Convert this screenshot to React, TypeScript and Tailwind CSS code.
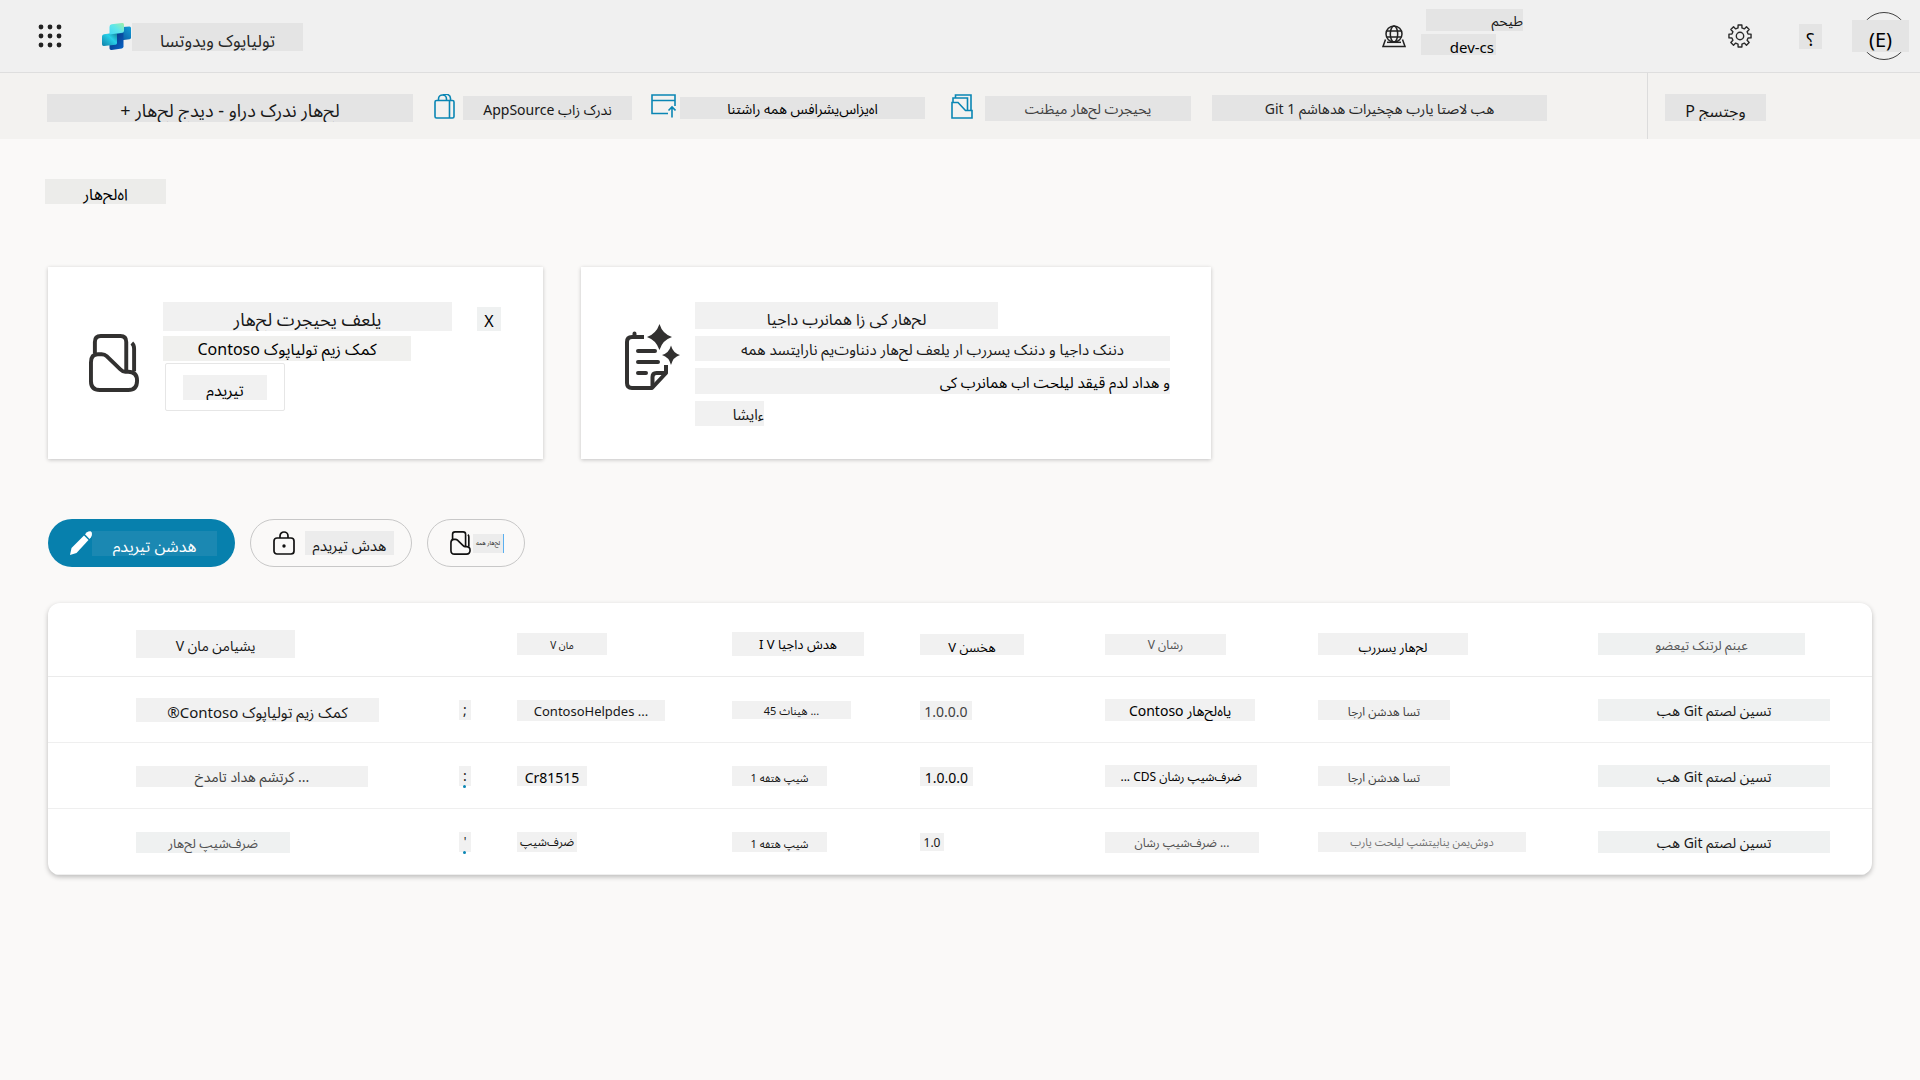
import type { ReactNode } from "react";

const font = "font-['Noto_Sans','Noto_Sans_Arabic',sans-serif]";

/** A shaded text block; letters run strictly left to right. */
function Tag({ className = "", children }: { className?: string; children: ReactNode }) {
  return (
    <span className={`flex shrink-0 items-end justify-center overflow-hidden whitespace-nowrap [direction:ltr] [unicode-bidi:bidi-override] ${className}`}>
      <span className="[unicode-bidi:bidi-override]">{children}</span>
    </span>
  );
}

function Waffle() {
  const p = [3, 12, 21];
  return (
    <svg width="24" height="24" viewBox="0 0 24 24" fill="#222">
      {p.map((y) => p.map((x) => <circle key={`${x}-${y}`} cx={x} cy={y} r="2.4" />))}
    </svg>
  );
}

function Logo() {
  return (
    <svg width="29" height="27" viewBox="0 0 29 27">
      <defs>
        <linearGradient id="top" x1="0" y1="1" x2="1" y2="0">
          <stop offset="0" stopColor="#3fd8f5" />
          <stop offset="0.5" stopColor="#5fe6ea" />
          <stop offset="1" stopColor="#a0f0a8" />
        </linearGradient>
        <linearGradient id="left" x1="0" y1="1" x2="1" y2="0">
          <stop offset="0" stopColor="#0f7fa8" />
          <stop offset="0.6" stopColor="#27d0e8" />
          <stop offset="1" stopColor="#127f96" />
        </linearGradient>
        <linearGradient id="right" x1="0" y1="1" x2="1" y2="0">
          <stop offset="0" stopColor="#0a4a98" />
          <stop offset="1" stopColor="#13a0d8" />
        </linearGradient>
        <linearGradient id="bottom" x1="0" y1="0" x2="1" y2="1">
          <stop offset="0" stopColor="#0a2f78" />
          <stop offset="1" stopColor="#0765c8" />
        </linearGradient>
      </defs>
      <path d="M14 4.500 27.500 3.500q1.500 0 1.500 1.500v9.500q0 1.500-1.500 1.700L14 18z" fill="url(#right)" />
      <path d="M7.500 12 21.500 10v13.500q0 1.700-1.700 2l-10.100 1.500q-2 .2-2.200-1.700z" fill="url(#bottom)" />
      <path d="M0 13.500q0-2 2-2.200L15 9.500V20q0 1.500-1.500 1.700L2 23q-2 .2-2-1.700z" fill="url(#left)" />
      <path d="M7.500 4Q7.500 1.500 9.700 1.200L20 0q2-.2 2 1.700v6q0 1.700-1.700 2L7.500 11.500z" fill="url(#top)" />
    </svg>
  );
}

function Globe() {
  return (
    <svg width="24" height="23" viewBox="0 0 24 23" fill="none" stroke="#222" strokeWidth="1.500">
      <circle cx="12" cy="9" r="8" />
      <ellipse cx="12" cy="9" rx="3.700" ry="8" />
      <path d="M4.700 6h14.600M4.700 12h14.600" />
      <path d="M3.500 14.500 1 21.500h22l-2.500-7" />
      <path d="M5 17.300h14" />
    </svg>
  );
}

function Gear() {
  const teeth = 8;
  const pts: string[] = [];
  for (let i = 0; i < teeth; i++) {
    const a = (i * 2 * Math.PI) / teeth;
    [[-0.24, 8.3], [-0.17, 11.2], [0.17, 11.2], [0.24, 8.3]].forEach(([d, r]) => {
      pts.push(`${(12 + r * Math.sin(a + d)).toFixed(2)},${(12 - r * Math.cos(a + d)).toFixed(2)}`);
    });
  }
  return (
    <svg width="24" height="24" viewBox="0 0 24 24" fill="none" stroke="#2a2a2a" strokeWidth="1.400" strokeLinejoin="round">
      <polygon points={pts.join(" ")} />
      <circle cx="12" cy="12" r="3.700" />
    </svg>
  );
}

function Bag() {
  return (
    <svg width="21" height="25" viewBox="0 0 21 25" fill="none" stroke="#0a86b4" strokeWidth="1.600">
      <rect x="1" y="6.500" width="19" height="17.500" rx="1.500" />
      <path d="M15.500 7v17M4.500 7V5a4 4 0 0 1 8 0v2M9 1.300a4.500 4.500 0 0 1 7.500 3.700v2" />
    </svg>
  );
}

function Publish() {
  return (
    <svg width="25" height="24" viewBox="0 0 25 24" fill="none" stroke="#0a86b4" strokeWidth="1.600">
      <path d="M17 19.500H1V1h23v11M1 6.500h23" />
      <path d="M21 23.500V13M17.500 16.500 21 13l3.500 3.500" />
    </svg>
  );
}

function SharpFolder() {
  return (
    <svg width="22" height="25" viewBox="0 0 22 25" fill="none" stroke="#0a86b4" strokeWidth="1.600">
      <path d="M1 8.500h6l7.500 8H21V24H1z" />
      <path d="M2 8V4h14.500v12.500M4.500 4V1H20v15" />
    </svg>
  );
}

function RoundFolder({ width, height, color, stroke }: { width: number; height: number; color: string; stroke: number }) {
  return (
    <svg width={width} height={height} viewBox="0 0 51 59" fill="none" stroke={color} strokeWidth={stroke} strokeLinejoin="round">
      <path d="M6 20V8q0-6 6-6h20q6 0 6 6v30" />
      <path d="M43.700 9q2.300 2 2.300 6v23" />
      <path d="M2 29q0-8.500 7-8.500h4q3 0 5 2l14 13.500q2.500 2.500 5 2.500h3q9 0 9 9 0 9.500-9 9.500H11q-9 0-9-9z" />
    </svg>
  );
}

function NoteSpark() {
  return (
    <svg width="55" height="66" viewBox="0 0 55 66" fill="none" stroke="#323130" strokeWidth="4">
      <path d="M19 13H7q-5 0-5 5v41q0 5 5 5h20l14-15v-8" strokeLinejoin="round" />
      <path d="M27.500 63V53q0-4 4-4H42" />
      <path d="M9.500 9.500v3M13 27h17M13 38h20M13 49h8" strokeLinecap="round" />
      <path d="M34.500 0q3 10 12.500 13-9.500 3-12.500 13Q31 16 22 13q9-3 12.500-13z" fill="#323130" stroke="none" />
      <path d="M46 21.500q2 7.500 9 9.500-7 2-9 10-2-8-9-10 7-2 9-9.500z" fill="#323130" stroke="none" />
    </svg>
  );
}

function Pencil() {
  return (
    <svg width="22" height="24" viewBox="0 0 22 24" fill="#fff">
      <path d="M14 4.500 18.500 9 6.500 22 0 24l1.500-7z" />
      <path d="M15 3.300 17 1.200Q18.500 0 20.500.2 22 .5 22 3 22 5 21 6.200L19.500 7.900z" />
    </svg>
  );
}

function Lock() {
  return (
    <svg width="22" height="24" viewBox="0 0 22 24" fill="none" stroke="#111" strokeWidth="1.700">
      <rect x="1" y="7" width="20" height="16" rx="3" />
      <path d="M7 7V5a4 4 0 0 1 8 0v2" />
      <circle cx="11" cy="15" r="1.700" fill="#111" stroke="none" />
    </svg>
  );
}

const gray = "bg-[#f1f1f1]";
const cool = "bg-[#eff1f1]";

type Cell = { text: string; box: string; dot?: boolean };

const columns: Cell[] = [
  { text: "V نام نمایشی", box: `${gray} h-7 w-[159px] text-[14px] leading-6` },
  { text: "", box: "" },
  { text: "V نام", box: `${gray} h-[22px] w-[90px] text-[10px] leading-5` },
  { text: "I V ایجاد شده", box: `${gray} h-6 w-[132px] text-[13px] leading-6 text-black` },
  { text: "V نسخه", box: `${gray} h-[21px] w-[104px] text-[13px] leading-4 text-black` },
  { text: "V ناشر", box: `${gray} h-[21px] w-[121px] text-[12px] leading-5 text-neutral-600` },
  { text: "بررسی راه‌حل", box: `${gray} h-[22px] w-[150px] text-[13px] leading-4 text-black` },
  { text: "وضعیت کنترل منبع", box: `${cool} h-[22px] w-[207px] text-[13px] leading-5 text-neutral-600` },
];

const check = `${gray} h-5 w-[132px] text-[12px] leading-4 text-neutral-700`;
const git = `${cool} h-[22px] w-[232px] text-[14px] leading-5`;
const week = `${gray} h-5 w-[95px] text-[11px] leading-4`;

const rows: Cell[][] = [
  [
    { text: "®Contoso کوپایلوت میز کمک", box: `${gray} h-6 w-[243px] text-[15px] leading-5` },
    { text: ";", box: `${gray} h-5 w-3 text-[14px] leading-5` },
    { text: "ContosoHelpdes ...", box: `${gray} h-[21px] w-[148px] text-[13px] leading-5` },
    { text: "45 ثانیه ...", box: `${gray} h-[18px] w-[119px] text-[11px] leading-4` },
    { text: "1.0.0.0", box: `${gray} h-[19px] w-[52px] text-[14px] leading-4 text-neutral-700` },
    { text: "Contoso راه‌حل‌های", box: `${gray} h-[22px] w-[150px] text-[14px] leading-5 text-black` },
    { text: "اجرا نشده است", box: check },
    { text: "به Git متصل نیست", box: git },
  ],
  [
    { text: "خدمات داده مشترک ...", box: `${gray} h-[21px] w-[232px] text-[14px] leading-5 text-neutral-700` },
    { text: ":", box: `${gray} h-5 w-3 text-[14px] leading-5`, dot: true },
    { text: "Cr81515", box: `${gray} h-5 w-[70px] text-[14px] leading-4 text-black` },
    { text: "1 هفته پیش", box: week },
    { text: "1.0.0.0", box: `${gray} h-[19px] w-[53px] text-[14px] leading-4 text-black` },
    { text: "... CDS ناشر پیش‌فرض", box: `${gray} h-[22px] w-[152px] text-[12px] leading-5 text-black` },
    { text: "اجرا نشده است", box: check },
    { text: "به Git متصل نیست", box: git },
  ],
  [
    { text: "راه‌حل پیش‌فرض", box: `${cool} h-[21px] w-[154px] text-[13px] leading-5 text-neutral-600` },
    { text: "'", box: `${gray} h-5 w-3 text-[12px] leading-5`, dot: true },
    { text: "پیش‌فرض", box: `${gray} h-5 w-[60px] text-[12px] leading-5` },
    { text: "1 هفته پیش", box: week },
    { text: "1.0", box: `${gray} h-[18px] w-6 text-[12px] leading-4` },
    { text: "ناشر پیش‌فرض ...", box: `${gray} h-[21px] w-[154px] text-[12px] leading-5 text-neutral-600` },
    { text: "برای تحلیل پشتیبانی نمی‌شود", box: `${gray} h-5 w-[208px] text-[11px] leading-5 text-neutral-500` },
    { text: "به Git متصل نیست", box: git },
  ],
];

const bar = "bg-[#e4e4e4]";

export default function App() {
  return (
    <div className={`min-h-screen bg-[#faf9f8] text-neutral-900 ${font}`}>
      <header className="flex h-[73px] items-center border-b border-[#dedede] bg-[#f0f0f0] pl-[38px] pr-[11px]">
        <button aria-label="Apps" className="mr-10">
          <Waffle />
        </button>
        <Logo />
        <Tag className={`${bar} ml-px mt-0.5 h-7 w-[171px] text-[17px] leading-5 text-neutral-800`}>استودیو کوپایلوت</Tag>
        <div className="ml-auto flex items-center">
          <Globe />
          <div className="ml-[15px] mr-[205px] flex w-[102px] flex-col gap-[3px] pb-2">
            <Tag className={`${bar} ml-[5px] h-[22px] justify-end text-[14px] leading-5`}>محیط</Tag>
            <Tag className={`${bar} h-[21px] w-[75px] justify-end pr-0.5 text-[15px] leading-4 text-black`}>dev-cs</Tag>
          </div>
          <button aria-label="Settings">
            <Gear />
          </button>
          <button className="ml-[47px]">
            <Tag className={`${bar} h-[25px] w-[23px] text-[18px] leading-5 text-black`}>؟</Tag>
          </button>
          <button className="relative ml-[30px] flex h-12 w-[57px] items-center justify-center">
            <span className="absolute left-2 top-0 size-12 rounded-full border border-neutral-700" />
            <Tag className={`${bar} relative h-8 w-full text-[20px] leading-6 text-black`}>(E)</Tag>
          </button>
        </div>
      </header>

      <nav className="flex h-[66px] items-stretch bg-[#f3f2f0] pl-[47px]">
        <div className="flex items-center">
          <button>
            <Tag className={`${bar} mt-1 h-7 w-[366px] text-[18px] leading-6`}>+ راه‌حل جدید - وارد کردن راه‌حل</Tag>
          </button>
          <button className="ml-[21px] flex items-center gap-2">
            <Bag />
            <Tag className={`${bar} mt-1 h-6 w-[169px] text-[14px] leading-5`}>AppSource باز کردن</Tag>
          </button>
          <button className="ml-[19px] flex items-center gap-1">
            <Publish />
            <Tag className={`${bar} mt-1 h-[22px] w-[245px] text-[14px] leading-5 text-black`}>انتشار همه سفارشی‌سازی‌ها</Tag>
          </button>
          <button className="ml-[26px] flex items-center gap-3">
            <SharpFolder />
            <Tag className={`${bar} mt-1 h-[25px] w-[206px] text-[14px] leading-6 text-neutral-700`}>تنظیم راه‌حل ترجیحی</Tag>
          </button>
          <button className="ml-[21px]">
            <Tag className={`${bar} mt-1 h-[26px] w-[335px] text-[14px] leading-6 text-neutral-800`}>Git 1 مشاهده تاریخچه برای اتصال به</Tag>
          </button>
        </div>
        <div className="ml-auto flex w-[273px] items-center border-l border-[#dcdcdc] pl-[17px]">
          <button>
            <Tag className={`${bar} mt-0.5 h-[27px] w-[101px] text-[16px] leading-5`}>P جستجو</Tag>
          </button>
        </div>
      </nav>

      <main className="px-12 pt-10">
        <h1 className="-ml-[3px] flex">
          <Tag className="h-[25px] w-[121px] bg-[#ececea] text-[16px] leading-5 text-black">راه‌حل‌ها</Tag>
        </h1>

        <section className="mt-[63px] flex gap-[38px]">
          <article className="flex h-48 w-[495px] bg-white pl-[41px] pt-[35px] shadow-[0_1px_4px_rgba(0,0,0,0.22)]">
            <div className="mr-6 pt-8">
              <RoundFolder width={50} height={58} color="#323130" stroke={4} />
            </div>
            <div>
              <Tag className={`${gray} h-[29px] w-[289px] text-[18px] leading-6`}>راه‌حل ترجیحی فعلی</Tag>
              <Tag className="mt-[5px] h-[25px] w-[248px] bg-[#f0f0ee] text-[16px] leading-6 text-black">Contoso کوپایلوت میز کمک</Tag>
              <button className="ml-0.5 mt-0.5 flex h-12 w-30 items-center justify-center rounded-xs border border-[#e6e6e6]">
                <Tag className={`${gray} h-[25px] w-[84px] text-[16px] leading-5 text-black`}>مدیریت</Tag>
              </button>
            </div>
            <button className="ml-[25px] mt-[5px] self-start" aria-label="Close">
              <Tag className={`${cool} h-6 w-6 text-[16px] leading-5 text-black`}>X</Tag>
            </button>
          </article>

          <article className="flex h-48 w-[630px] bg-white pl-11 pt-[35px] shadow-[0_1px_4px_rgba(0,0,0,0.22)]">
            <div className="mr-[15px] pt-[22px]">
              <NoteSpark />
            </div>
            <div className="flex flex-col gap-[7px]">
              <Tag className={`${gray} h-[27px] w-[303px] text-[16px] leading-5`}>ایجاد برنامه از یک راه‌حل</Tag>
              <Tag className={`${gray} h-[25px] w-[475px] text-[15px] leading-6`}>همه دستیاران می‌توانند راه‌حل فعلی را بررسی کنند و ایجاد کنند</Tag>
              <Tag className={`${gray} h-[26px] w-[475px] justify-end text-[15px] leading-6 text-black`}>یک برنامه با تحلیل دقیق مدل داده و</Tag>
              <Tag className={`${gray} h-[25px] w-[69px] justify-end text-[15px] leading-6`}>اشیاء</Tag>
            </div>
          </article>
        </section>

        <div className="mt-15 flex">
          <button className="flex h-12 w-[187px] items-center rounded-full bg-[#0780ad] pl-[22px]">
            <Pencil />
            <Tag className="h-[25px] w-[125px] bg-[#1b88b2] text-[16px] leading-5 text-white">مدیریت نشده</Tag>
          </button>
          <button className="ml-[15px] flex h-12 w-[162px] items-center gap-2.5 rounded-full border border-[#c8c8c8] pl-[22px]">
            <Lock />
            <Tag className="h-6 w-[89px] bg-[#ececec] text-[15px] leading-5">مدیریت شده</Tag>
          </button>
          <button className="ml-[15px] flex h-12 w-[98px] items-center gap-0.5 rounded-full border border-[#c8c8c8] pl-[22px]">
            <RoundFolder width={21} height={24} color="#111" stroke={4} />
            <Tag className="h-[19px] w-[31px] border-r border-[#5ab0f0] bg-[#ececec] text-[6px] leading-5">همه راه‌حل</Tag>
          </button>
        </div>

        <div className="mt-9 overflow-hidden rounded-xl bg-white shadow-[0_2px_5px_rgba(0,0,0,0.25)]">
          <table className="w-full table-fixed">
            <colgroup>
              <col className="w-[411px]" />
              <col className="w-[58px]" />
              <col className="w-[215px]" />
              <col className="w-[188px]" />
              <col className="w-[185px]" />
              <col className="w-[213px]" />
              <col className="w-[280px]" />
              <col />
            </colgroup>
            <thead>
              <tr className="h-[73px] border-b border-[#ebebeb]">
                {columns.map((c, i) => (
                  <th key={i} scope="col" className="p-0 pt-2.5 font-normal first:pl-[88px]">
                    {c.text && <Tag className={c.box}>{c.text}</Tag>}
                  </th>
                ))}
              </tr>
            </thead>
            <tbody>
              {rows.map((r, i) => (
                <tr key={i} className="h-[66px] border-b border-[#efefef]">
                  {r.map((c, j) => (
                    <td key={j} className="p-0 pt-0.5 first:pl-[88px]">
                      <div className="relative">
                        <Tag className={c.box}>{c.text}</Tag>
                        {c.dot && <span className="absolute -bottom-0.5 left-1 size-[3px] rounded-full bg-[#0a86b4]" />}
                      </div>
                    </td>
                  ))}
                </tr>
              ))}
            </tbody>
          </table>
        </div>
      </main>
    </div>
  );
}
